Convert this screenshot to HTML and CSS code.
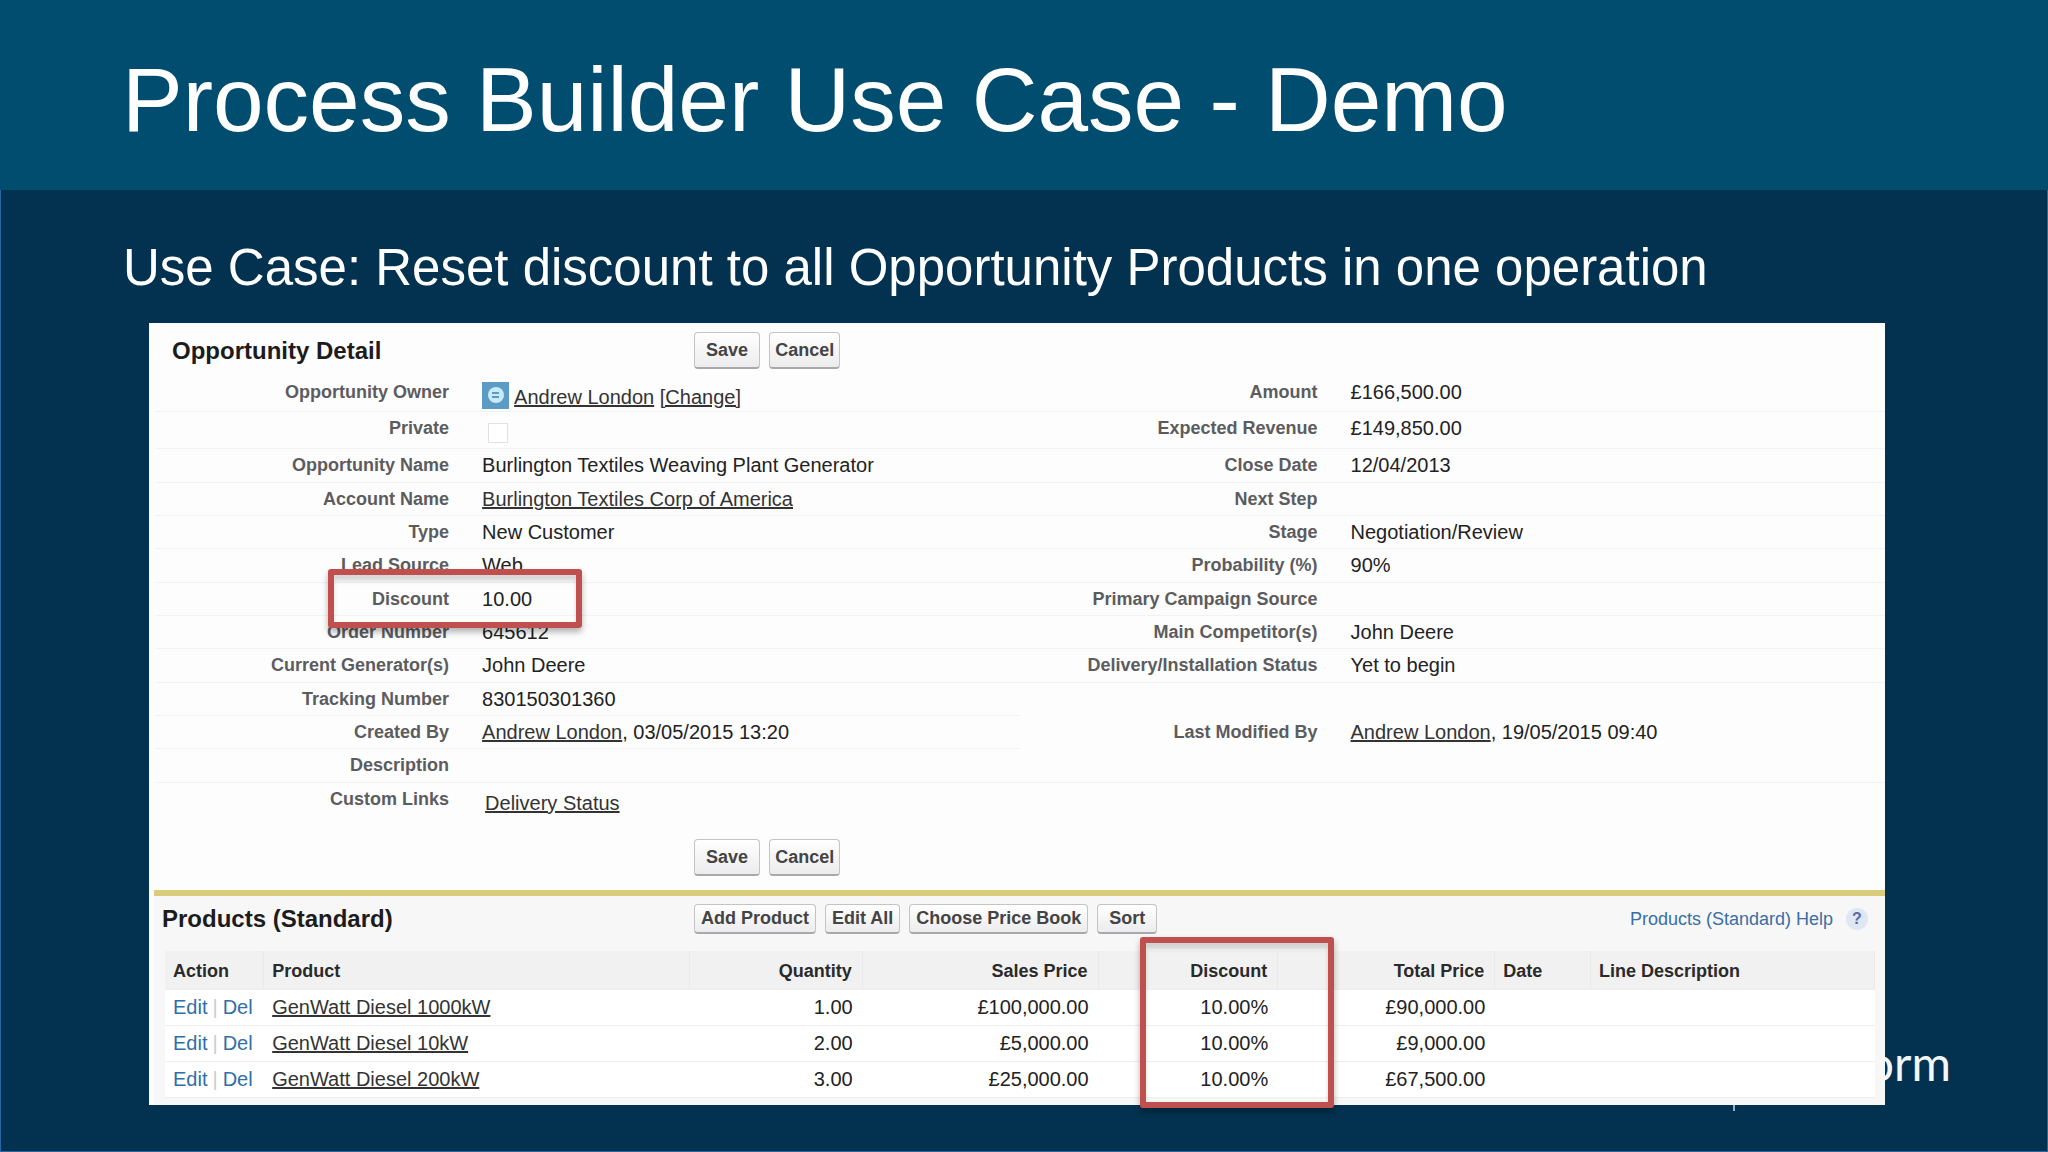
FILE: index.html
```
<!DOCTYPE html>
<html lang="en">
<head>
    <meta charset="utf-8">
    <title>Process Builder Use Case - Demo</title>
    <link rel="stylesheet" href="styles.css">
</head>
<body>
    <header class="slide-header">
        <h1>Process Builder Use Case - Demo</h1>
    </header>

    <main class="slide-body">
        <p class="use-case">Use Case: Reset discount to all Opportunity Products in one operation</p>

        <div class="brand">orm</div>

        <div class="panel">
            <div class="detail-head">
                <h2>Opportunity Detail</h2>
                <div class="buttons">
                    <button type="button" class="btn wide">Save</button>
                    <button type="button" class="btn">Cancel</button>
                </div>
            </div>

            <table class="detail">
                <colgroup>
                    <col class="col-label"><col class="col-value"><col class="col-label-right"><col>
                </colgroup>
                <tr class="owner-row">
                    <th>Opportunity Owner</th>
                    <td>
                        <div class="owner">
                            <svg class="owner-icon" viewBox="0 0 27 27">
                                <rect width="27" height="27" fill="#5b9bc4"/>
                                <circle cx="14" cy="13" r="8" fill="#c9eafa"/>
                                <path d="M10 11h7M10 15h7" stroke="#5b9bc4" stroke-width="2"/>
                            </svg>
                            <span><a href="#">Andrew London</a> <a href="#">[Change]</a></span>
                        </div>
                    </td>
                    <th>Amount</th>
                    <td>£166,500.00</td>
                </tr>
                <tr class="private-row">
                    <th><label for="private">Private</label></th>
                    <td><input type="checkbox" id="private"></td>
                    <th>Expected Revenue</th>
                    <td>£149,850.00</td>
                </tr>
                <tr>
                    <th>Opportunity Name</th>
                    <td>Burlington Textiles Weaving Plant Generator</td>
                    <th>Close Date</th>
                    <td>12/04/2013</td>
                </tr>
                <tr>
                    <th>Account Name</th>
                    <td><a href="#">Burlington Textiles Corp of America</a></td>
                    <th>Next Step</th>
                    <td></td>
                </tr>
                <tr>
                    <th>Type</th>
                    <td>New Customer</td>
                    <th>Stage</th>
                    <td>Negotiation/Review</td>
                </tr>
                <tr>
                    <th>Lead Source</th>
                    <td>Web</td>
                    <th>Probability (%)</th>
                    <td>90%</td>
                </tr>
                <tr>
                    <th class="marked">Discount<span class="highlight highlight-field"></span></th>
                    <td>10.00</td>
                    <th>Primary Campaign Source</th>
                    <td></td>
                </tr>
                <tr>
                    <th>Order Number</th>
                    <td>645612</td>
                    <th>Main Competitor(s)</th>
                    <td>John Deere</td>
                </tr>
                <tr>
                    <th>Current Generator(s)</th>
                    <td>John Deere</td>
                    <th>Delivery/Installation Status</th>
                    <td>Yet to begin</td>
                </tr>
                <tr>
                    <th>Tracking Number</th>
                    <td>830150301360</td>
                    <th class="no-line"></th>
                    <td class="no-line"></td>
                </tr>
                <tr>
                    <th>Created By</th>
                    <td><a href="#">Andrew London</a>, 03/05/2015 13:20</td>
                    <th class="no-line">Last Modified By</th>
                    <td class="no-line"><a href="#">Andrew London</a>, 19/05/2015 09:40</td>
                </tr>
                <tr>
                    <th>Description</th>
                    <td colspan="3"></td>
                </tr>
                <tr class="links-row">
                    <th>Custom Links</th>
                    <td colspan="3"><a href="#">Delivery Status</a></td>
                </tr>
            </table>

            <div class="detail-foot">
                <div class="buttons">
                    <button type="button" class="btn wide">Save</button>
                    <button type="button" class="btn">Cancel</button>
                </div>
            </div>

            <section class="products">
                <div class="products-head">
                    <h2>Products (Standard)</h2>
                    <div class="buttons">
                        <button type="button" class="btn">Add Product</button>
                        <button type="button" class="btn">Edit All</button>
                        <button type="button" class="btn">Choose Price Book</button>
                        <button type="button" class="btn wide">Sort</button>
                    </div>
                    <a class="help" href="#">Products (Standard) Help <span class="help-icon">?</span></a>
                </div>

                <table class="items">
                    <thead>
                        <tr>
                            <th class="c-action">Action</th>
                            <th class="c-product">Product</th>
                            <th class="c-qty num">Quantity</th>
                            <th class="c-price num">Sales Price</th>
                            <th class="c-discount num marked">Discount<span class="highlight highlight-column"></span></th>
                            <th class="c-total num">Total Price</th>
                            <th class="c-date">Date</th>
                            <th class="c-line">Line Description</th>
                        </tr>
                    </thead>
                    <tbody>
                        <tr>
                            <td class="actions"><a href="#">Edit</a><i>|</i><a href="#">Del</a></td>
                            <td><a href="#">GenWatt Diesel 1000kW</a></td>
                            <td class="num">1.00</td>
                            <td class="num">£100,000.00</td>
                            <td class="num">10.00%</td>
                            <td class="num">£90,000.00</td>
                            <td></td>
                            <td></td>
                        </tr>
                        <tr>
                            <td class="actions"><a href="#">Edit</a><i>|</i><a href="#">Del</a></td>
                            <td><a href="#">GenWatt Diesel 10kW</a></td>
                            <td class="num">2.00</td>
                            <td class="num">£5,000.00</td>
                            <td class="num">10.00%</td>
                            <td class="num">£9,000.00</td>
                            <td></td>
                            <td></td>
                        </tr>
                        <tr>
                            <td class="actions"><a href="#">Edit</a><i>|</i><a href="#">Del</a></td>
                            <td><a href="#">GenWatt Diesel 200kW</a></td>
                            <td class="num">3.00</td>
                            <td class="num">£25,000.00</td>
                            <td class="num">10.00%</td>
                            <td class="num">£67,500.00</td>
                            <td></td>
                            <td></td>
                        </tr>
                    </tbody>
                </table>
            </section>
        </div>
    </main>
</body>
</html>
```
FILE: styles.css
```
* {
    box-sizing: border-box;
}

body {
    margin: 0;
    min-height: 100vh;
    display: flex;
    flex-direction: column;
    background-color: #02324f;
    font-family: "Liberation Sans", Arial, sans-serif;
    color: #222;
}

/* header */
.slide-header {
    padding: 50px 118px 40px 122px;
    background-color: #014d70;
}

h1 {
    margin: 0;
    font-size: 91px;
    line-height: 100px;
    font-weight: normal;
    color: #fff;
}

.slide-body {
    position: relative;
    flex: 1;
    padding: 48px 162px 46px 148px;
    border: 1px solid #2767a5;
    border-top: none;
}

.use-case {
    margin: 0 -100px 25px -26px;
    font-size: 51px;
    line-height: 60px;
    color: #fff;
}

/* logo text that runs behind the panel */
.brand {
    position: absolute;
    right: 96px;
    bottom: 58px;
    font-family: Lato, sans-serif;
    font-size: 48px;
    line-height: 60px;
    color: #f2f7fa;
}

.brand::before {
    content: "";
    position: absolute;
    right: 216px;
    bottom: -18px;
    width: 2px;
    height: 20px;
    background-color: #8fb4cc;
}

.panel {
    position: relative;
    background-color: #fdfdfe;
}

h2 {
    margin: 0;
    font-size: 24px;
    color: #1c1c1c;
}

a {
    color: #333;
}

/* buttons */
.buttons {
    display: flex;
    gap: 9px;
}

.btn {
    height: 37px;
    padding: 0 5px;
    border: 1px solid #c4c4c4;
    border-bottom: 2px solid #a9a9a9;
    border-radius: 4px;
    background: linear-gradient(#fff, #ececee);
    font-family: inherit;
    font-size: 18px;
    font-weight: bold;
    color: #444;
    cursor: pointer;
}

.btn.wide {
    padding: 0 11px;
}

/* opportunity detail */
.detail-head {
    display: flex;
    align-items: center;
    padding: 9px 0 7px;
}

.detail-head h2 {
    width: 31.4%;
    padding-left: 23px;
}

.detail {
    width: calc(100% - 6px);
    margin-left: 6px;
    table-layout: fixed;
    border-collapse: separate;
    border-spacing: 0;
    font-size: 20px;
    line-height: 24px;
}

.col-label {
    width: 17%;
}

.col-value {
    width: 33%;
}

.col-label-right {
    width: 17.2%;
}

.detail th,
.detail td {
    height: 33px;
    padding: 4px 0 0;
    vertical-align: top;
    border-bottom: 1px solid #f1f2f6;
}

.detail tr:nth-child(3n) th,
.detail tr:nth-child(3n) td {
    height: 34px;
}

.detail th {
    text-align: right;
    font-size: 18px;
    color: #5c5c5e;
}

.detail td {
    padding-left: 33px;
}

.detail .owner-row th,
.detail .owner-row td {
    height: 36px;
}

.detail .private-row th,
.detail .private-row td {
    height: 37px;
}

.detail .no-line {
    border-bottom: none;
}

.detail .links-row th,
.detail .links-row td {
    height: 56px;
    border-bottom: none;
}

.detail .links-row td {
    padding: 8px 0 0 36px;
}

.owner {
    display: flex;
    align-items: flex-end;
    gap: 5px;
    margin-top: 2px;
}

.owner-icon {
    width: 27px;
    height: 27px;
}

input[type="checkbox"] {
    appearance: none;
    display: block;
    width: 20px;
    height: 20px;
    margin: 7px 0 0 6px;
    border: 1px solid #e2e2e4;
    background-color: #fff;
}

.detail-foot {
    padding: 0 0 14px 31.4%;
}

/* red boxes over the discount values */
.marked {
    position: relative;
}

.highlight {
    position: absolute;
    z-index: 1;
    border: 6px solid #c0504d;
    border-radius: 3px;
    box-shadow: 0 4px 6px rgba(0, 0, 0, 0.3), inset 0 6px 4px rgba(0, 0, 0, 0.15);
}

.highlight-field {
    left: 173px;
    right: -133px;
    top: -14px;
    bottom: -13px;
}

.highlight-column {
    left: 41px;
    right: -57px;
    top: -14px;
    height: 171px;
}

/* products */
.products {
    margin-left: 5px;
    padding-bottom: 7px;
    border-top: 6px solid #d9cd7c;
    background-color: #f7f7f7;
}

.products-head {
    display: flex;
    align-items: center;
    padding: 8px 17px 17px 0;
}

.products-head h2 {
    width: 31.5%;
    padding-left: 8px;
}

.products-head .btn {
    height: 30px;
    padding: 0 6px;
}

.products-head .btn.wide {
    padding: 0 11px;
}

.help {
    display: flex;
    align-items: center;
    gap: 13px;
    margin-left: auto;
    font-size: 18px;
    text-decoration: none;
    color: #3a6ea5;
}

.help-icon {
    width: 22px;
    height: 22px;
    border-radius: 50%;
    background-color: #dfe6f4;
    font-size: 16px;
    line-height: 22px;
    font-weight: bold;
    text-align: center;
    color: #5a6aa5;
}

.items {
    width: calc(100% - 21px);
    margin-left: 11px;
    table-layout: fixed;
    border-collapse: separate;
    border-spacing: 0;
    background-color: #fff;
    font-size: 20px;
}

.items th,
.items td {
    height: 36px;
    padding: 0 10px 0 8px;
    text-align: left;
    border-bottom: 1px solid #efeff1;
}

.items th {
    height: 39px;
    padding-top: 3px;
    background-color: #f1f1f2;
    border-right: 1px solid #e9e9eb;
    font-size: 18px;
    color: #2a2a2a;
}

.items .num {
    text-align: right;
}

.items .actions {
    padding-right: 0;
    white-space: nowrap;
}

.actions a {
    text-decoration: none;
    color: #2f6ea8;
}

.actions i {
    padding: 0 5px;
    font-style: normal;
    color: #ccc;
}

.c-action { width: 5.8%; }
.c-product { width: 24.9%; }
.c-qty { width: 10.1%; }
.c-price { width: 13.8%; }
.c-discount { width: 10.5%; }
.c-total { width: 12.7%; }
.c-date { width: 5.6%; }
```
